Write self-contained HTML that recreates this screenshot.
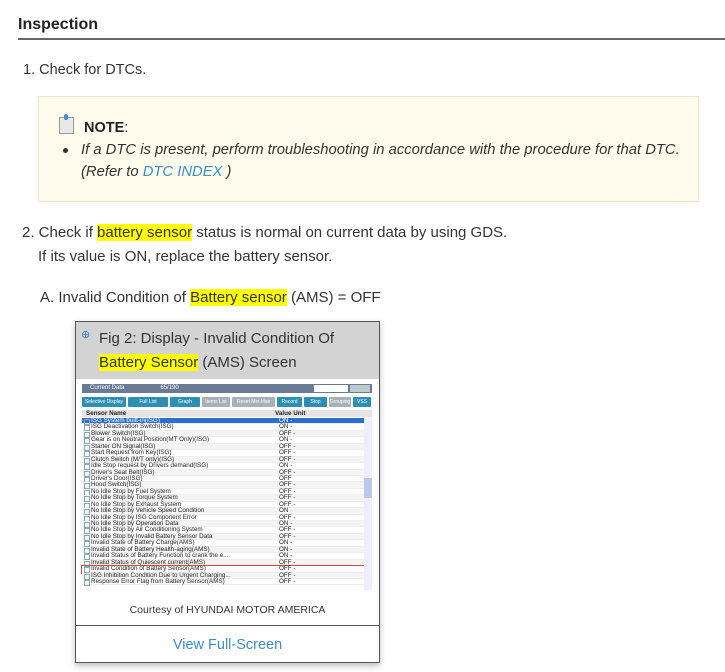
<!DOCTYPE html>
<html><head><meta charset="utf-8"><style>
*{margin:0;padding:0;box-sizing:border-box}
body{width:725px;height:672px;background:#fff;font-family:"Liberation Sans",sans-serif;color:#333;position:relative;overflow:hidden}
.a{position:absolute;white-space:nowrap}
.hl{background:#ffff00}
.t{font-size:14.5px}
.it{font-style:italic;font-size:14.8px}
.lk{color:#3a8dc8}
.scr{position:absolute;left:81px;top:382px;width:292px;height:211px;background:#fff;font-size:6.3px;line-height:6.4px;color:#222;overflow:hidden}
.row{height:6.45px;position:relative;border-bottom:1px solid #eee;padding-left:9px}
.row:nth-child(odd){background:#f4f4f4}
.row span{position:absolute;left:197px}
.row:before{content:"";position:absolute;left:2px;top:1px;width:4px;height:4px;border:1px solid #8aa}
.btn{position:absolute;top:15px;height:10px;background:#2d8fb5;color:#fff;font-size:5px;line-height:10px;text-align:center;border-radius:1px}
</style></head><body>
<div class="a" style="left:18px;top:16px;font-size:16px;font-weight:bold;color:#222">Inspection</div>
<div class="a" style="left:18px;top:38px;width:707px;height:2px;background:#666"></div>
<div class="a t" style="left:23px;top:62px">1. Check for DTCs.</div>
<div class="a" style="left:38px;top:96px;width:661px;height:106px;background:#fffcee;border:1px solid #f1e4c4"></div>
<div class="a" style="left:59px;top:117px;width:15px;height:17px;background:#e8e8e8;border:1px solid #999"></div>
<div class="a" style="left:64px;top:114px;width:4px;height:6px;background:#4a8ad0;border-radius:2px"></div>
<div class="a" style="left:84px;top:120px;font-size:14.5px;font-weight:bold;color:#222">NOTE<span style="font-weight:normal">:</span></div>
<div class="a" style="left:63px;top:148px;width:5px;height:5px;border-radius:50%;background:#333"></div>
<div class="a it" style="left:81px;top:142px">If a DTC is present, perform troubleshooting in accordance with the procedure for that DTC.</div>
<div class="a it" style="left:81px;top:164px">(Refer to <span class="lk">DTC INDEX</span> )</div>
<div class="a" style="left:22px;top:224px;font-size:15px">2. Check if <span class="hl">battery sensor</span> status is normal on current data by using GDS.</div>
<div class="a" style="left:38px;top:248px;font-size:15px">If its value is ON, replace the battery sensor.</div>
<div class="a" style="left:40px;top:289px;font-size:15px">A. Invalid Condition of <span class="hl">Battery sensor</span> (AMS) = OFF</div>

<div class="a" style="left:75px;top:321px;width:305px;height:342px;border:1px solid #555;background:#fff;box-shadow:0 3px 6px rgba(0,0,0,.25)"></div>
<div class="a" style="left:76px;top:322px;width:303px;height:57px;background:#d3d3d3"></div>
<div class="a" style="left:81px;top:328px;font-size:11px;color:#3a7ec0">&#x2295;</div>
<div class="a" style="left:99px;top:330px;font-size:15px;color:#333">Fig 2: Display - Invalid Condition Of</div>
<div class="a" style="left:99px;top:354px;font-size:15px;color:#333"><span class="hl">Battery Sensor</span> (AMS) Screen</div>
<div class="scr">
 <div style="position:absolute;left:1px;top:2px;width:290px;height:9px;background:#6a7a94;color:#fff;font-size:6px;line-height:9px;padding-left:8px">Current Data<span style="margin-left:36px">65/190</span>
  <div style="position:absolute;right:24px;top:1px;width:34px;height:7px;background:#fff"></div>
  <div style="position:absolute;right:2px;top:1px;width:20px;height:7px;background:#bcc"></div></div>
 <div class="btn" style="left:1px;width:44px">Selective Display</div>
 <div class="btn" style="left:47px;width:40px">Full List</div>
 <div class="btn" style="left:89px;width:30px">Graph</div>
 <div class="btn" style="left:121px;width:28px;background:#a8b0b8">Items List</div>
 <div class="btn" style="left:151px;width:43px;background:#a8b0b8">Reset Min.Max</div>
 <div class="btn" style="left:196px;width:25px">Record</div>
 <div class="btn" style="left:223px;width:23px">Stop</div>
 <div class="btn" style="left:248px;width:22px;background:#a8b0b8">Grouping</div>
 <div class="btn" style="left:272px;width:18px">VSS</div>
 <div style="position:absolute;left:1px;top:28px;width:290px;height:7px;background:#e4e4e4;font-weight:bold;padding-left:4px;line-height:7px">Sensor Name<span style="position:absolute;left:193px">Value Unit</span></div>
 <div style="position:absolute;left:1px;top:36px;width:282px">
  <div class="row" style="background:#2d6fd0;color:#fff">ISG System built-in(ISG)<span>ON -</span></div>
  <div class="row">ISG Deactivation Switch(ISG)<span>ON -</span></div>
  <div class="row">Blower Switch(ISG)<span>OFF -</span></div>
  <div class="row">Gear is on Neutral Position(MT Only)(ISG)<span>ON -</span></div>
  <div class="row">Starter ON Signal(ISG)<span>OFF -</span></div>
  <div class="row">Start Request from Key(ISG)<span>OFF -</span></div>
  <div class="row">Clutch Switch (M/T only)(ISG)<span>OFF -</span></div>
  <div class="row">Idle Stop request by Drivers demand(ISG)<span>ON -</span></div>
  <div class="row">Driver's Seat Belt(ISG)<span>OFF -</span></div>
  <div class="row">Driver's Door(ISG)<span>OFF</span></div>
  <div class="row">Hood Switch(ISG)<span>OFF -</span></div>
  <div class="row">No Idle Stop by Fuel System<span>OFF -</span></div>
  <div class="row">No Idle Stop by Torque System<span>OFF -</span></div>
  <div class="row">No Idle Stop by Exhaust System<span>OFF -</span></div>
  <div class="row">No Idle Stop by Vehicle Speed Condition<span>ON</span></div>
  <div class="row">No Idle Stop by ISG Component Error<span>OFF -</span></div>
  <div class="row">No Idle Stop by Operation Data<span>ON -</span></div>
  <div class="row">No Idle Stop by Air Conditioning System<span>OFF -</span></div>
  <div class="row">No Idle Stop by Invalid Battery Sensor Data<span>OFF -</span></div>
  <div class="row">Invalid State of Battery Charge(AMS)<span>ON -</span></div>
  <div class="row">Invalid State of Battery Health-aging(AMS)<span>ON -</span></div>
  <div class="row">Invalid Status of Battery Function to crank the e...<span>ON -</span></div>
  <div class="row">Invalid Status of Quiescent current(AMS)<span>OFF -</span></div>
  <div class="row" style="outline:1px solid #e04040">Invalid Condition of Battery Sensor(AMS)<span>OFF -</span></div>
  <div class="row">ISG Inhibition Condition Due to Urgent Charging...<span>OFF -</span></div>
  <div class="row">Response Error Flag from Battery Sensor(AMS)<span>OFF -</span></div>
 </div>
 <div style="position:absolute;left:283px;top:36px;width:8px;height:172px;background:#eef"></div>
 <div style="position:absolute;left:283px;top:96px;width:8px;height:20px;background:#b8c8f0"></div>
</div>
<div class="a" style="left:76px;top:604px;width:303px;text-align:center;font-size:10.5px;color:#333">Courtesy of HYUNDAI MOTOR AMERICA</div>
<div class="a" style="left:76px;top:625px;width:303px;height:1px;background:#555"></div>
<div class="a" style="left:76px;top:637px;width:303px;text-align:center;font-size:14.5px;color:#3a8dc8">View Full-Screen</div>
</body></html>
